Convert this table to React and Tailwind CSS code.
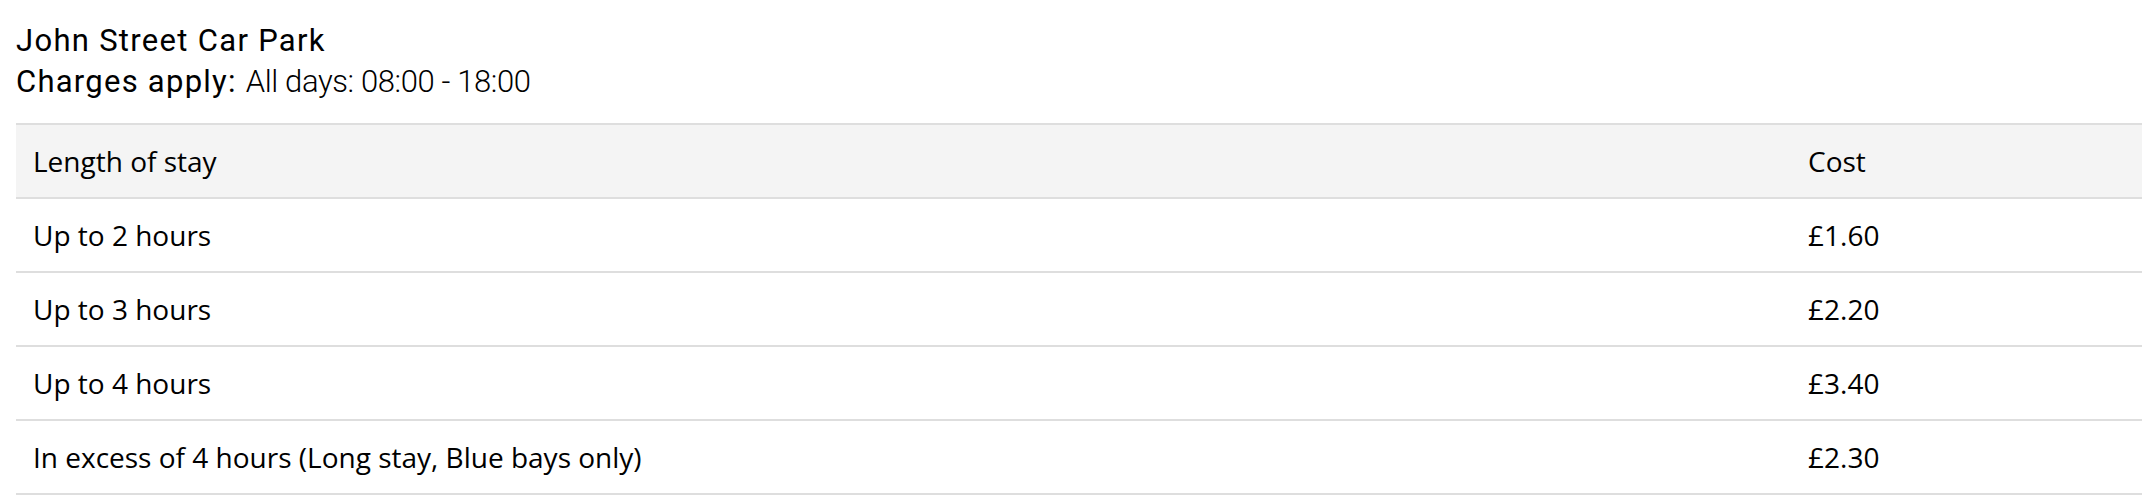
export default function App() {
  const rows = [
    { stay: 'Up to 2 hours', cost: '£1.60' },
    { stay: 'Up to 3 hours', cost: '£2.20' },
    { stay: 'Up to 4 hours', cost: '£3.40' },
    { stay: 'In excess of 4 hours (Long stay, Blue bays only)', cost: '£2.30' },
  ];

  return (
    <div className="min-h-screen bg-white pl-[16px] text-black">
      {/* Car park heading */}
      <div className="pt-[22px] pb-[19px] font-['Roboto',sans-serif]">
        <h2 className="text-[31px] leading-[38px] tracking-[1.3px]">John Street Car Park</h2>
        <p className="text-[31px] leading-[44px] tracking-[1.25px]">
          <span>Charges apply:</span>{' '}
          <span className="font-light tracking-[-0.38px]">All days: 08:00 - 18:00</span>
        </p>
      </div>

      {/* Tariff table */}
      <table className="w-full border-collapse font-['Open_Sans',sans-serif] text-[28px]">
        <thead>
          <tr className="bg-[#f4f4f4] border-y-2 border-[#dedede]">
            <th className="h-[74px] w-[1775px] pl-[17px] text-left font-normal">Length of stay</th>
            <th className="h-[74px] pl-[17px] text-left font-normal">Cost</th>
          </tr>
        </thead>
        <tbody>
          {rows.map((r) => (
            <tr key={r.stay} className="border-b-2 border-[#dedede]">
              <td className="h-[74px] pl-[17px]">{r.stay}</td>
              <td className="h-[74px] pl-[17px]">{r.cost}</td>
            </tr>
          ))}
        </tbody>
      </table>
    </div>
  );
}
